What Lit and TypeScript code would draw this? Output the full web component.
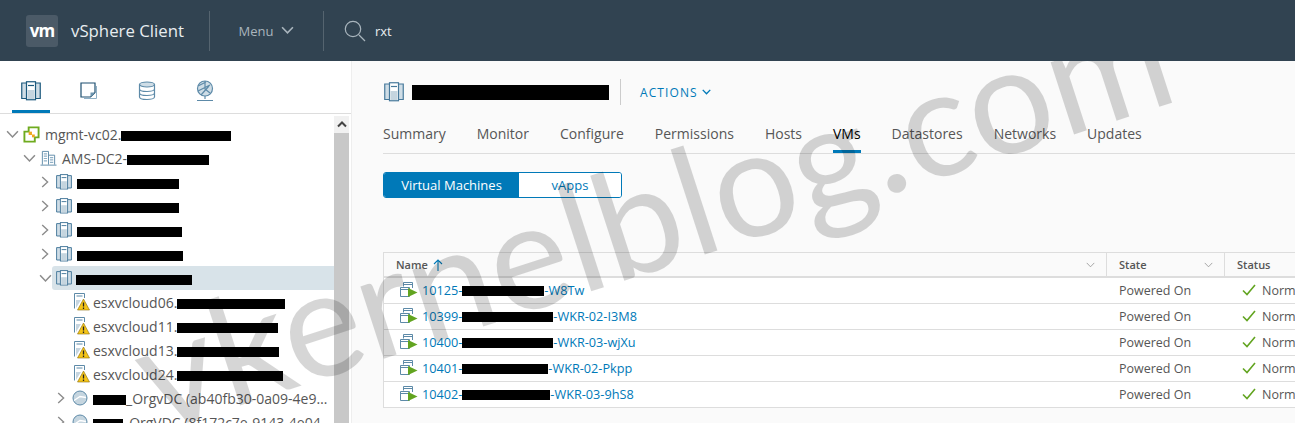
import { LitElement, html, css, svg } from "lit";
import { customElement } from "lit/decorators.js";

const clusterIcon = (size = 20, active = false) => {
  const c = active ? "#1d5a7e" : "#47799b";
  return svg`<svg class="ic" viewBox="0 0 20 20" width="${size}" height="${size}" fill="none">
    <path d="M5.500 2H.75v15.500H5.500M14.500 2h4.750v15.500H14.500" stroke="${c}" stroke-width="1.200" fill="#cfdde6"/>
    <rect x="5.500" y=".75" width="9" height="18" fill="#fff" stroke="${c}" stroke-width="1.200"/>
    <rect x="6.500" y="9" width="7" height="9" fill="#c5d5df"/>
    <path d="M7 4.500h6" stroke="${c}" stroke-width="1.200"/>
  </svg>`;
};
const hostWarn = svg`<svg class="ic" viewBox="0 0 16 18" width="16" height="18" fill="none">
  <path d="M.5 15.500V.5h10v4.500" stroke="#5d8aa8"/>
  <path d="M2.500 3h6" stroke="#5d8aa8"/>
  <path d="M2 7h5l-5 8z" fill="#c6d5df"/>
  <path d="M9.500 6 15.500 17H3.500z" fill="#f5c518" stroke="#8a6d0c" stroke-width=".6"/>
  <path d="M9.500 9.500v4M9.500 14.500V16" stroke="#222" stroke-width="1.300"/>
</svg>`;
const vmIcon = svg`<svg class="ic" viewBox="0 0 20 20" width="20" height="20" fill="none">
  <path d="M4.500 6.500V2.500h9V8" stroke="#5d8aa8"/>
  <path d="M4.500 4.500h9" stroke="#5d8aa8"/>
  <path d="M1.500 16.500V7.500h9v9z" stroke="#5d8aa8" fill="#fff"/>
  <path d="M1.500 9.500h9" stroke="#5d8aa8"/>
  <path d="M9 8 18.500 12.500 9 17z" fill="#62a420"/>
</svg>`;
const check = svg`<svg class="ic" viewBox="0 0 14 12" width="14" height="12" fill="none"><path d="M1 6.500 5 10.500 13 1" stroke="#62a420" stroke-width="1.600"/></svg>`;
const chevDown = (c: string, w = 12, sw = 1.400) => svg`<svg class="ic" viewBox="0 0 12 8" width="${w}" height="${(w * 2) / 3}" fill="none"><path d="M1 1.200 6 6.400l5-5.200" stroke="${c}" stroke-width="${sw}"/></svg>`;
const chevRight = svg`<svg class="ic" viewBox="0 0 8 12" width="8" height="12" fill="none"><path d="M1.200 1 6.600 6 1.200 11" stroke="#8c8c8c" stroke-width="1.400"/></svg>`;
const orgIcon = svg`<svg class="ic" viewBox="0 0 16 16" width="16" height="16" fill="none"><circle cx="8" cy="8" r="7" fill="#c5d5df" stroke="#5d8aa8"/><path d="M2 10.500 8 6.500l6 1" stroke="#fff" stroke-width="1.300"/></svg>`;

type TreeRow = { indent: number; open?: boolean; leaf?: boolean; icon: unknown; before?: string; box: number; after?: string; selected?: boolean };

const vcIcon = svg`<svg class="ic" viewBox="0 0 18 18" width="17" height="17" fill="none">
  <path d="M6 1.500h10.500V12H12.500V16.500H1.500V6H6z" stroke="#6fab1f" stroke-width="2" fill="#fff"/>
  <rect x="6" y="6" width="3.500" height="3.500" fill="#f0a81e"/><rect x="9.500" y="9" width="3" height="3" fill="#f0a81e"/>
</svg>`;
const dcIcon = svg`<svg class="ic" viewBox="0 0 18 18" width="17" height="17" fill="none">
  <path d="M2.500 15.500V1.500h6.500v14M9 5.500h6.500v10M.5 16h17" stroke="#5d8aa8"/>
  <path d="M4 4h3.500M4 6.500h3.500M4 9h3.500M4 11.500h3.500M10.500 8h3.500M10.500 10.500h3.500M10.500 13h3.500" stroke="#8fb0c6" stroke-width="1.300"/>
</svg>`;

const tree: TreeRow[] = [
  { indent: 6, open: true, icon: vcIcon, before: "mgmt-vc02.", box: 110 },
  { indent: 23, open: true, icon: dcIcon, before: "AMS-DC2-", box: 82 },
  { indent: 39, icon: clusterIcon(16), box: 102 },
  { indent: 39, icon: clusterIcon(16), box: 102 },
  { indent: 39, icon: clusterIcon(16), box: 105 },
  { indent: 39, icon: clusterIcon(16), box: 106 },
  { indent: 39, open: true, icon: clusterIcon(16), box: 116, selected: true },
  { indent: 55, leaf: true, icon: hostWarn, before: "esxvcloud06.", box: 108 },
  { indent: 55, leaf: true, icon: hostWarn, before: "esxvcloud11.", box: 101 },
  { indent: 55, leaf: true, icon: hostWarn, before: "esxvcloud13.", box: 102 },
  { indent: 55, leaf: true, icon: hostWarn, before: "esxvcloud24.", box: 106 },
  { indent: 55, icon: orgIcon, box: 33, after: "_OrgvDC (ab40fb30-0a09-4e9…" },
  { indent: 55, icon: orgIcon, box: 30, after: "_OrgVDC (8f172c7e-9143-4e04…" },
];

const vms = [
  { pre: "10125-", box: 82, post: "-W8Tw" },
  { pre: "10399-", box: 91, post: "-WKR-02-I3M8" },
  { pre: "10400-", box: 91, post: "-WKR-03-wjXu" },
  { pre: "10401-", box: 86, post: "-WKR-02-Pkpp" },
  { pre: "10402-", box: 88, post: "-WKR-03-9hS8" },
];
const tabs = ["Summary", "Monitor", "Configure", "Permissions", "Hosts", "VMs", "Datastores", "Networks", "Updates"];

@customElement("app-root")
export class AppRoot extends LitElement {
  static styles = css`
    :host { display: block; width: 1295px; height: 423px; overflow: hidden; font-family: "Open Sans", "Liberation Sans", sans-serif; font-size: 13px; color: #565656; background: #fafafa; }
    .ic { display: block; flex: none; }
    .box { display: inline-block; height: 10px; background: #000; vertical-align: -1px; flex: none; }

    header { height: 61px; background: #314351; display: flex; align-items: center; color: #fff; }
    .logo { width: 32px; height: 32px; margin-left: 26px; border-radius: 3px; background: #4b5a67; display: flex; align-items: center; justify-content: center; font-weight: 700; font-size: 17px; letter-spacing: -1px; }
    .brand { margin-left: 13px; font-size: 16.800px; color: #e8edf0; width: 138px; white-space: nowrap; }
    .sep { width: 1px; height: 40px; background: #55646f; }
    .menu { width: 113px; display: flex; align-items: center; justify-content: center; gap: 8px; color: #a9b5bd; font-size: 13px; }
    .search { display: flex; align-items: center; margin-left: 20px; gap: 9px; color: #e8edf0; font-size: 13px; }

    .body { position: relative; height: 362px; display: flex; overflow: hidden; }
    .mark { position: absolute; left: 651px; top: 150px; transform: translate(-50%, -50%) rotate(-18deg); font-size: 150px; font-weight: 400; color: rgba(0,0,0,.16); white-space: nowrap; pointer-events: none; font-family: "Lato", sans-serif; line-height: 1; }

    .side { width: 351px; flex: none; background: #fff; border-right: 1px solid #eee; }
    .side-tabs { height: 52px; border-bottom: 1px solid #ddd; display: flex; padding-left: 12px; }
    .stab { width: 38px; margin-right: 20px; height: 52px; display: flex; align-items: center; justify-content: center; box-sizing: border-box; padding-top: 8px; }
    .stab.on { border-bottom: 3px solid #0079b8; padding-top: 11px; }
    .tree-wrap { display: flex; }
    .tree { flex: 1; padding-top: 8px; min-width: 0; overflow: hidden; height: 301px; }
    .row { height: 24px; display: flex; align-items: center; white-space: nowrap; font-size: 14px; color: #565656; box-sizing: border-box; }
    .row .box { margin-top: 3px; }
    .row .box.bare { margin-left: -1px; }
    .sel .box { margin-left: -2px; }
    .chev { width: 18px; display: flex; justify-content: center; flex: none; }
    .ic-cell { width: 20px; margin-right: 4px; flex: none; display: flex; justify-content: center; }
    .ic-cell.end { justify-content: flex-end; margin-right: 3px; }
    .sel { flex: 1; height: 24px; display: flex; align-items: center; background: #d8e3e9; border-radius: 3px 0 0 3px; margin-left: -2px; padding-left: 2px; }
    .scroll { width: 15px; margin: 2px 2px 0 0; flex: none; background: #f1f1f1; display: flex; flex-direction: column; align-items: center; }
    .arrow { height: 17px; display: flex; align-items: center; justify-content: center; }
    .thumb { width: 15px; flex: 1; background: #c8c8c8; }

    .main { flex: 1; min-width: 0; padding: 18px 0 0 31px; }
    .title { display: flex; align-items: center; height: 26px; padding-left: 1px; }
    .title .box { height: 15px; width: 197px; margin-left: 8px; }
    .tsep { width: 1px; height: 26px; background: #ccc; margin: 0 19px 0 11px; }
    .actions { color: #0079b8; letter-spacing: 1.100px; font-size: 12px; display: flex; align-items: center; gap: 4px; }
    .tabs { display: flex; margin-top: 12px; height: 36px; border-bottom: 1px solid #ddd; gap: 31px; font-size: 14px; align-items: stretch; }
    .tab { display: flex; align-items: center; box-sizing: border-box; padding-bottom: 3px; }
    .tab.on { color: #000; border-bottom: 3px solid #0079b8; padding-bottom: 0; }
    .seg { display: flex; margin-top: 18px; width: 239px; height: 26px; border: 1px solid #0079b8; border-radius: 3px; overflow: hidden; box-sizing: border-box; font-size: 13px; }
    .seg div { display: flex; align-items: center; justify-content: center; }
    .seg .a { width: 135px; background: #0079b8; color: #fff; }
    .seg .b { flex: 1; background: #fff; color: #0079b8; }

    .table { margin-top: 54px; width: 930px; border-left: 1px solid #ddd; border-top: 1px solid #ddd; background: #fff; }
    .tr { display: grid; grid-template-columns: 723px 118px 1fr; height: 26px; border-bottom: 1px solid #ddd; box-sizing: border-box; align-items: center; font-size: 12.500px; }
    .tr.head { height: 25px; background: #fafafa; border-bottom: 2px solid #ddd; font-size: 11px; font-weight: 600; color: #565656; }
    .th { height: 23px; display: flex; align-items: center; justify-content: space-between; padding: 0 11px 0 12px; border-right: 1px solid #ddd; box-sizing: border-box; }
    .th.last { border-right: 0; }
    .name { display: flex; gap: 5px; align-items: center; }
    .cell { display: flex; align-items: center; padding-left: 12px; white-space: nowrap; padding-bottom: 1px; }
    .link { color: #0079b8; padding-left: 15px; gap: 3px; font-size: 12.700px; }
    .status { padding-left: 17px; gap: 6px; }
  `;

  render() {
    return html`
      <header>
        <div class="logo">vm</div>
        <div class="brand">vSphere Client</div>
        <div class="sep"></div>
        <div class="menu">Menu ${chevDown("#a9b5bd", 13, 1.500)}</div>
        <div class="sep"></div>
        <div class="search">
          <svg class="ic" viewBox="0 0 22 22" width="22" height="22" fill="none"><circle cx="9" cy="9" r="7.700" stroke="#a9b5bd" stroke-width="1.200"/><path d="M15 15l6 6" stroke="#a9b5bd" stroke-width="1.200"/></svg>
          <span>rxt</span>
        </div>
      </header>
      <div class="body">
        <aside class="side">
          <div class="side-tabs">
            <div class="stab on">${clusterIcon(20, true)}</div>
            <div class="stab"><svg class="ic" viewBox="0 0 18 18" width="18" height="18" fill="none"><path d="M1 1h14v9.500L10.500 15H1z" fill="#fff" stroke="#1d4f70" stroke-width="1.200"/><path d="M16.500 4v12.500H4" stroke="#8fb0c6"/><path d="M10.500 15v-4.500H15z" fill="#6f96b0"/></svg></div>
            <div class="stab"><svg class="ic" viewBox="0 0 18 20" width="18" height="20" fill="none" stroke="#5d8aa8" stroke-width="1.200"><ellipse cx="9" cy="3.500" rx="7.500" ry="2.500" fill="#cfdde6"/><path d="M1.500 3.500v12.500c0 1.400 3.400 2.500 7.500 2.500s7.500-1.100 7.500-2.500V3.500M1.500 8c0 1.400 3.400 2.500 7.500 2.500S16.500 9.400 16.500 8M1.500 12c0 1.400 3.400 2.500 7.500 2.500s7.500-1.100 7.500-2.500"/></svg></div>
            <div class="stab"><svg class="ic" viewBox="0 0 20 22" width="20" height="22" fill="none" stroke="#5d8aa8" stroke-width="1.200"><circle cx="10" cy="8.500" r="7.500" fill="#cfdde6"/><path d="M3 6l8-4M3 11l12-6M6 15l8-9M10 1v8l5 4"/><path d="M10 16v3M2 20.500h16"/></svg></div>
          </div>
          <div class="tree-wrap">
            <div class="tree">
              ${tree.map((r) => html`
                <div class="row" style="padding-left:${r.indent - 3}px">
                  <div class="chev">${r.leaf ? "" : r.open ? chevDown("#8c8c8c", 13) : chevRight}</div>
                  ${r.selected
                    ? html`<div class="sel"><div class="ic-cell">${r.icon}</div><span class="box" style="width:${r.box}px"></span></div>`
                    : html`<div class="ic-cell ${r.leaf ? "end" : ""}">${r.icon}</div>${r.before ?? ""}<span class="box ${r.before ? "" : "bare"}" style="width:${r.box}px"></span>${r.after ?? ""}`}
                </div>`)}
            </div>
            <div class="scroll">
              <div class="arrow"><svg class="ic" viewBox="0 0 10 7" width="10" height="7" fill="none"><path d="M1 5.500 5 1.500l4 4" stroke="#444" stroke-width="2"/></svg></div>
              <div class="thumb"></div>
            </div>
          </div>
        </aside>
        <main class="main">
          <div class="title">
            ${clusterIcon(20)}
            <span class="box"></span>
            <div class="tsep"></div>
            <div class="actions">ACTIONS ${chevDown("#0079b8", 9, 1.800)}</div>
          </div>
          <div class="tabs">
            ${tabs.map((t) => html`<div class="tab ${t === "VMs" ? "on" : ""}">${t}</div>`)}
          </div>
          <div class="seg"><div class="a">Virtual Machines</div><div class="b">vApps</div></div>
          <div class="table">
            <div class="tr head">
              <div class="th"><span class="name">Name <svg class="ic" viewBox="0 0 10 12" width="10" height="12" fill="none"><path d="M5 12V1M1 5l4-4 4 4" stroke="#0079b8" stroke-width="1.100"/></svg></span>${chevDown("#8c8c8c", 9, 1)}</div>
              <div class="th"><span>State</span>${chevDown("#8c8c8c", 9, 1)}</div>
              <div class="th last"><span>Status</span></div>
            </div>
            ${vms.map((v) => html`
              <div class="tr">
                <div class="cell link">${vmIcon}<span>${v.pre}<span class="box" style="width:${v.box}px"></span>${v.post}</span></div>
                <div class="cell">Powered On</div>
                <div class="cell status">${check}<span>Normal</span></div>
              </div>`)}
          </div>
        </main>
        <div class="mark">vkernelblog.com</div>
      </div>
    `;
  }
}
